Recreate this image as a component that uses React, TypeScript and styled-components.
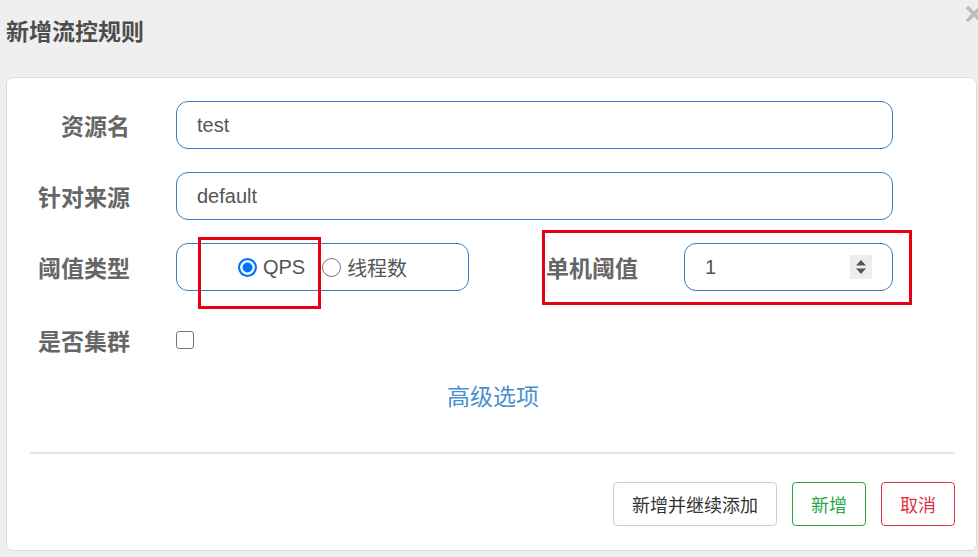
import { ReactElement } from 'react';
import styled, { createGlobalStyle } from 'styled-components';

const GlobalStyle = createGlobalStyle`
  html, body {
    margin: 0;
    padding: 0;
    background: #efefef;
  }
  body {
    width: 978px;
    height: 557px;
    overflow: hidden;
    font-family: "Liberation Sans", "Noto Sans CJK SC", sans-serif;
  }
`;

const Page = styled.div`
  position: relative;
  width: 978px;
  height: 557px;
  overflow: hidden;
`;

const Header = styled.div`
  height: 77px;
  padding: 15px 0 0 6px;
  box-sizing: border-box;
`;

const Title = styled.h4`
  margin: 0;
  font-size: 23px;
  line-height: 30px;
  font-weight: bold;
  color: #4d4d4d;
  font-family: "Noto Sans CJK SC", sans-serif;
`;

const Close = styled.button`
  position: absolute;
  top: 5px;
  left: 965px;
  padding: 0;
  border: none;
  background: transparent;
  cursor: pointer;
`;

const Card = styled.div`
  margin: 0 1px 0 6px;
  height: 474px;
  box-sizing: border-box;
  background: #fff;
  border: 1px solid #dcdcdc;
  border-radius: 7px;
  padding: 23px 21px 23px 0;
  display: flex;
  flex-direction: column;
`;

const Row = styled.div<{ $height?: number }>`
  display: flex;
  align-items: center;
  height: ${({ $height }) => $height ?? 48}px;
  margin-bottom: 23px;
`;

const Label = styled.label<{ $auto?: boolean }>`
  width: ${({ $auto }) => ($auto ? 'auto' : '123px')};
  margin-right: 46px;
  text-align: right;
  font-family: "Noto Sans CJK SC", sans-serif;
  font-size: 23px;
  font-weight: bold;
  color: #666;
  white-space: nowrap;
`;

const Field = styled.div<{ $width: number }>`
  position: relative;
  width: ${({ $width }) => $width}px;
  height: 48px;
  box-sizing: border-box;
  border: 1px solid #3a7bbf;
  border-radius: 12px;
  padding: 0 20px;
  display: flex;
  align-items: center;
  font-size: 20px;
  color: #555;
`;

const RadioField = styled(Field)`
  justify-content: center;
  padding: 0;
`;

const RadioOption = styled.label`
  display: flex;
  align-items: center;
  gap: 6px;
  font-family: "Liberation Sans", "Noto Sans CJK SC", sans-serif;
  font-size: 20px;
  color: #555;
  & + & {
    margin-left: 17px;
  }
`;

const RadioDot = styled.span<{ $checked?: boolean }>`
  width: 19px;
  height: 19px;
  box-sizing: border-box;
  border-radius: 50%;
  border: ${({ $checked }) => ($checked ? '2px solid #0075ff' : '1px solid #767676')};
  background: ${({ $checked }) => ($checked ? '#0075ff' : '#fff')};
  box-shadow: ${({ $checked }) => ($checked ? 'inset 0 0 0 2.5px #fff' : 'none')};
`;

const Group = styled.div`
  position: relative;
  display: flex;
  align-items: center;
  margin-left: 77px;
`;

const Highlight = styled.div<{ $top: number; $left: number; $width: number; $height: number }>`
  position: absolute;
  top: ${({ $top }) => $top}px;
  left: ${({ $left }) => $left}px;
  width: ${({ $width }) => $width}px;
  height: ${({ $height }) => $height}px;
  box-sizing: border-box;
  border: 3px solid #e60012;
  pointer-events: none;
`;

const Spinner = styled.span`
  margin-left: auto;
  width: 22px;
  height: 24px;
  background: #ededed;
  display: flex;
  align-items: center;
  justify-content: center;
`;

const Checkbox = styled.span`
  width: 18px;
  height: 18px;
  box-sizing: border-box;
  border: 1px solid #767676;
  border-radius: 3px;
  background: #fff;
`;

const AdvancedLink = styled.a`
  align-self: center;
  margin: -9px 0 0 24px;
  font-family: "Noto Sans CJK SC", sans-serif;
  font-size: 23px;
  line-height: 30px;
  color: #4a8fd0;
  text-decoration: none;
  cursor: pointer;
`;

const Divider = styled.hr`
  margin: 42px 0 0 23px;
  border: none;
  border-top: 2px solid #e6e6e6;
  height: 0;
`;

const Footer = styled.div`
  margin-top: 28px;
  display: flex;
  justify-content: flex-end;
  gap: 15px;
`;

const Button = styled.button<{ $tone?: 'default' | 'success' | 'danger' }>`
  height: 44px;
  padding: 0 18px;
  box-sizing: border-box;
  background: #fff;
  border-radius: 4px;
  font-family: "Noto Sans CJK SC", sans-serif;
  font-size: 18px;
  cursor: pointer;
  ${({ $tone }) =>
    $tone === 'success'
      ? 'color: #28a745; border: 1px solid #28a745;'
      : $tone === 'danger'
      ? 'color: #dc3545; border: 1px solid #dc3545;'
      : 'color: #333; border: 1px solid #cfcfcf;'}
`;

export default function App(): ReactElement {
  return (
    <Page>
      <GlobalStyle />
      <Header>
        <Title>新增流控规则</Title>
      </Header>
      <Close aria-label="close">
        <svg width="18" height="18" viewBox="0 0 18 18">
          <path d="M2 2 L16 16 M16 2 L2 16" stroke="#bdbdbd" strokeWidth="3.6" />
        </svg>
      </Close>
      <Card>
        <Row>
          <Label>资源名</Label>
          <Field $width={717}>test</Field>
        </Row>
        <Row>
          <Label>针对来源</Label>
          <Field $width={717}>default</Field>
        </Row>
        <Row>
          <Label>阈值类型</Label>
          <RadioField $width={293}>
            <Highlight $top={-7} $left={21} $width={123} $height={72} />
            <RadioOption>
              <RadioDot $checked />
              QPS
            </RadioOption>
            <RadioOption>
              <RadioDot />
              线程数
            </RadioOption>
          </RadioField>
          <Group>
            <Highlight $top={-13} $left={-4} $width={370} $height={75} />
            <Label $auto>单机阈值</Label>
            <Field $width={209}>
              1
              <Spinner>
                <svg width="12" height="18" viewBox="0 0 12 18">
                  <path d="M6 2 L11 7.5 L1 7.5 Z M1 10.5 L11 10.5 L6 16 Z" fill="#555" />
                </svg>
              </Spinner>
            </Field>
          </Group>
        </Row>
        <Row $height={52}>
          <Label>是否集群</Label>
          <Checkbox />
        </Row>
        <AdvancedLink>高级选项</AdvancedLink>
        <Divider />
        <Footer>
          <Button>新增并继续添加</Button>
          <Button $tone="success">新增</Button>
          <Button $tone="danger">取消</Button>
        </Footer>
      </Card>
    </Page>
  );
}
